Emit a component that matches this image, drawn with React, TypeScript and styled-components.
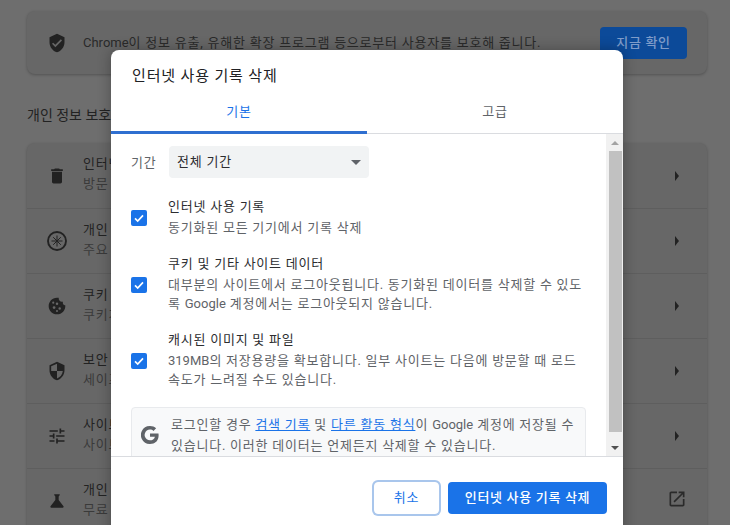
import React from "react";
import styled, { createGlobalStyle } from "styled-components";

const Global = createGlobalStyle`
  html, body { margin: 0; padding: 0; height: 525px; overflow: hidden; background: #6e6e6e; }
  body { font-family: Roboto, "Noto Sans CJK KR", sans-serif; font-size: 13px; letter-spacing: 0.77px; }
  * { box-sizing: border-box; }
`;

const Latin = styled.span`
  letter-spacing: 0;
`;
const Page = styled.div`
  position: relative;
  width: 730px;
  height: 525px;
  overflow: hidden;
  padding: 11px 23px 0 27px;
  background: #6e6e6e;
  color: #202020;
`;
const Card = styled.section`
  background: #676767;
  border-radius: 8px;
  box-shadow: 0 1px 3px rgba(0, 0, 0, 0.25);
`;
const SafetyRow = styled.div`
  display: flex;
  align-items: center;
  height: 63px;
  padding: 0 20px;
`;
const IconSlot = styled.span`
  width: 36px;
  flex: none;
  display: flex;
  color: #222;
`;
const LinkIconSlot = styled.span`
  width: 20px;
  flex: none;
  display: flex;
  margin-top: -5px;
  color: #2a2a2a;
`;
const SafetyText = styled.span`
  flex: 1;
  padding-bottom: 2px;
  white-space: nowrap;
  color: #2a2a2a;
`;
const DimButton = styled.button`
  width: 87px;
  height: 32px;
  padding: 0 0 2px;
  border: 0;
  border-radius: 4px;
  background: #0c4a99;
  color: #7f9cc9;
  font: 500 13px Roboto, "Noto Sans CJK KR", sans-serif;
  letter-spacing: 0.68px;
`;
const SectionTitle = styled.h2`
  margin: 31px 0 18px;
  height: 20px;
  font-size: 14px;
  line-height: 20px;
  font-weight: 400;
  letter-spacing: 0;
  color: #222;
`;
const Row = styled.div`
  display: flex;
  align-items: center;
  height: 65px;
  padding: 0 20px;
  & + & { border-top: 1px solid #5e5e5e; }
`;
const RowText = styled.div`
  flex: 1;
  padding-bottom: 3px;
  line-height: 20px;
  white-space: nowrap;
`;
const RowTitle = styled.div`
  color: #222;
`;
const RowSub = styled.div`
  color: #3a3a3a;
`;
const Arrow = styled.span`
  width: 0;
  height: 0;
  margin-right: 8px;
  border-left: 4px solid #222;
  border-top: 5px solid transparent;
  border-bottom: 5px solid transparent;
`;

const Dialog = styled.div`
  position: absolute;
  left: 111px;
  top: 50px;
  width: 512px;
  height: 500px;
  display: flex;
  flex-direction: column;
  background: #fff;
  border-radius: 8px;
  box-shadow: 0 0 14px rgba(0, 0, 0, 0.3);
  color: #202124;
`;
const DialogTitle = styled.h1`
  margin: 0;
  height: 44px;
  padding: 15px 21px 0;
  font-size: 15px;
  line-height: 22px;
  font-weight: 400;
  letter-spacing: 0.85px;
  color: #202124;
`;
const Tabs = styled.div`
  display: flex;
  height: 40px;
  border-bottom: 1px solid #dadce0;
`;
const Tab = styled.div<{ $active?: boolean }>`
  flex: 1;
  margin-bottom: -1px;
  display: flex;
  align-items: center;
  justify-content: center;
  padding-bottom: 5px;
  border-bottom: 3px solid ${(p) => (p.$active ? "#2f6fd0" : "transparent")};
  color: ${(p) => (p.$active ? "#1a73e8" : "#5f6368")};
`;
const Body = styled.div`
  display: flex;
  height: 322px;
`;
const Scroller = styled.div`
  flex: 1;
  overflow: hidden;
  padding: 12px 20px 0;
`;
const PeriodRow = styled.div`
  display: flex;
  align-items: center;
  height: 32px;
  margin-bottom: 19px;
`;
const PeriodLabel = styled.span`
  width: 38px;
  padding-bottom: 2px;
  color: #5f6368;
`;
const Select = styled.div`
  position: relative;
  width: 200px;
  height: 32px;
  padding: 0 8px 3px;
  display: flex;
  align-items: center;
  border-radius: 4px;
  background: #f1f3f4;
  color: #2c2d30;
  &::after {
    content: "";
    position: absolute;
    right: 8px;
    top: 14px;
    border-left: 5px solid transparent;
    border-right: 5px solid transparent;
    border-top: 5px solid #5f6368;
  }
`;
const Option = styled.div`
  display: flex;
  align-items: center;
  margin-bottom: 16px;
  line-height: 20px;
`;
const Check = styled.span`
  flex: none;
  width: 16px;
  height: 16px;
  margin: 2px 21px 0 0;
  border-radius: 2px;
  background: #1a73e8;
  display: flex;
  align-items: center;
  justify-content: center;
`;
const OptionTitle = styled.div`
  color: #2c2d30;
`;
const OptionSub = styled.div`
  color: #5f6368;
  margin-top: 1px;
  width: 420px;
  line-height: 19.5px;
`;
const Notice = styled.div`
  display: flex;
  align-items: flex-start;
  margin-top: 17px;
  height: 70px;
  width: 455px;
  padding: 6px 8px 6px 9px;
  background: #f8f9fa;
  border: 1px solid #e8eaed;
  border-radius: 4px;
  line-height: 21px;
  color: #5f6368;
`;
const GSlot = styled.span`
  flex: none;
  width: 20px;
  margin: 12px 10px 0 0;
  display: flex;
  color: #5f6368;
`;
const Link = styled.a`
  color: #1a73e8;
  text-decoration: underline;
`;
const ScrollBar = styled.div`
  flex: none;
  width: 17px;
  display: flex;
  flex-direction: column;
  align-items: center;
  background: #f1f1f1;
`;
const ScrollBtn = styled.span<{ $down?: boolean }>`
  flex: none;
  width: 100%;
  height: 17px;
  display: flex;
  align-items: center;
  justify-content: center;
  &::before {
    content: "";
    border-left: 4px solid transparent;
    border-right: 4px solid transparent;
    ${(p) => (p.$down ? "border-top: 4px solid #505050;" : "border-bottom: 4px solid #a3a3a3;")}
  }
`;
const Thumb = styled.div`
  width: 13px;
  height: 281px;
  margin-bottom: 7px;
  margin-left: 1px;
  background: #c1c1c1;
`;
const Footer = styled.div`
  display: flex;
  justify-content: flex-end;
  gap: 9px;
  padding: 25px 16px 0;
  border-top: 1px solid #dadce0;
`;
const CancelButton = styled.button`
  width: 65px;
  height: 32px;
  padding: 0 0 3px;
  border: 1px solid #fff;
  border-radius: 4px;
  background: #fff;
  box-shadow: 0 0 0 2px #a9c6ec;
  color: #1a73e8;
  font: 400 13px Roboto, "Noto Sans CJK KR", sans-serif;
  letter-spacing: 0.68px;
`;
const DeleteButton = styled.button`
  width: 159px;
  height: 32px;
  padding: 0 0 3px;
  border: 0;
  border-radius: 4px;
  background: #1a73e8;
  color: #fff;
  font: 500 13px Roboto, "Noto Sans CJK KR", sans-serif;
  letter-spacing: 0.68px;
`;

const Icon = ({ d, size = 20 }: { d: string; size?: number }) => (
  <svg width={size} height={size} viewBox="0 0 24 24" fill="currentColor">
    <path d={d} />
  </svg>
);

const ICONS = {
  shield: "M12 1L3 5v6c0 5.55 3.84 10.74 9 12 5.16-1.26 9-6.45 9-12V5l-9-4zm-2 16l-4-4 1.41-1.41L10 14.17l6.59-6.59L18 9l-8 8z",
  trash: "M6 19c0 1.1.9 2 2 2h8c1.1 0 2-.9 2-2V7H6v12zM19 4h-3.5l-1-1h-5l-1 1H5v2h14V4z",
  security: "M12 1L3 5v6c0 5.55 3.84 10.74 9 12 5.16-1.26 9-6.45 9-12V5l-9-4zm0 10.99h7c-.53 4.12-3.28 7.79-7 8.94V12H5V6.3l7-3.11v8.8z",
  tune: "M3 17v2h6v-2H3zM3 5v2h10V5H3zm10 16v-2h8v-2h-8v-2h-2v6h2zM7 9v2H3v2h4v2h2V9H7zm14 4v-2H11v2h10zm-6-4h2V7h4V5h-4V3h-2v6z",
  flask: "M19.8 18.4L14 10.67V6.5l1.35-1.69c.26-.33.03-.81-.39-.81H9.04c-.42 0-.65.48-.39.81L10 6.5v4.17L4.2 18.4c-.49.66-.02 1.6.8 1.6h14c.82 0 1.29-.94.8-1.6z",
  external: "M19 19H5V5h7V3H5c-1.11 0-2 .9-2 2v14c0 1.1.89 2 2 2h14c1.1 0 2-.9 2-2v-7h-2v7zM14 3v2h3.59l-9.83 9.83 1.41 1.41L19 6.41V10h2V3h-7z",
};

const SandboxIcon = () => (
  <svg width="20" height="20" viewBox="0 0 20 20" fill="none" stroke="currentColor">
    <circle cx="10" cy="10" r="9" strokeWidth="1.9" />
    <path d="M10 4.5v11M4.5 10h11M6.2 6.2l7.6 7.6M13.8 6.2l-7.6 7.6" strokeWidth="1" />
  </svg>
);

const CookieIcon = () => (
  <svg width="20" height="20" viewBox="0 0 24 24" fill="currentColor" fillRule="evenodd">
    <path d="M21.95 10.99c-1.79-.03-3.7-1.95-2.68-4.22-2.97 1-5.78-1.59-5.19-4.56C7.1.74 2 6.41 2 12c0 5.52 4.48 10 10 10 5.89 0 10.54-5.08 9.95-11.01zM8.5 15.6a1.7 1.7 0 1 1 0-3.4 1.7 1.7 0 0 1 0 3.4zM7.5 9.3a1.3 1.3 0 1 1 0-2.6 1.3 1.3 0 0 1 0 2.6zM12 10.8a1.5 1.5 0 1 1 0-3 1.5 1.5 0 0 1 0 3zM15.2 16.4a1.5 1.5 0 1 1 0-3 1.5 1.5 0 0 1 0 3zM12 19.2a1.2 1.2 0 1 1 0-2.4 1.2 1.2 0 0 1 0 2.4z" />
  </svg>
);

const CheckMark = () => (
  <svg width="12" height="12" viewBox="0 0 12 12" fill="none" stroke="#fff" strokeWidth="1.7">
    <path d="M2 6.4l2.7 2.6L10 3.4" />
  </svg>
);

const GLogo = () => (
  <svg width="18" height="18" viewBox="0 0 24 24" fill="currentColor">
    <path d="M23.5 12.3c0-.85-.08-1.67-.22-2.45H12v4.63h6.57a5.6 5.6 0 0 1-2.44 3.68v3.06h3.95c2.31-2.13 3.42-5.26 3.42-8.92zM12 24c3.3 0 6.06-1.09 8.08-2.96l-3.95-3.06c-1.09.73-2.49 1.17-4.13 1.17-3.18 0-5.87-2.15-6.83-5.03H1.1v3.16A12 12 0 0 0 12 24zM5.17 14.12a7.2 7.2 0 0 1 0-4.24V6.72H1.1a12 12 0 0 0 0 10.56l4.07-3.16zM12 4.75c1.79 0 3.4.62 4.66 1.82l3.5-3.5C18.06 1.1 15.3 0 12 0A12 12 0 0 0 1.1 6.72l4.07 3.16C6.13 6.9 8.82 4.75 12 4.75z" />
  </svg>
);

const rows: { icon: React.ReactNode; title: string; sub: string; external?: boolean }[] = [
  { icon: <Icon d={ICONS.trash} />, title: "인터넷 사용 기록 삭제", sub: "방문 기록, 쿠키, 캐시 등을 삭제합니다." },
  { icon: <SandboxIcon />, title: "개인 정보 보호 가이드", sub: "주요 개인 정보 보호 및 보안 설정을 검토합니다." },
  { icon: <CookieIcon />, title: "쿠키 및 기타 사이트 데이터", sub: "쿠키가 허용됩니다." },
  { icon: <Icon d={ICONS.security} />, title: "보안", sub: "세이프 브라우징 및 기타 보안 설정" },
  { icon: <Icon d={ICONS.tune} />, title: "사이트 설정", sub: "사이트에서 사용하고 표시할 수 있는 정보를 제어합니다." },
  { icon: <Icon d={ICONS.flask} />, title: "개인 정보 보호 샌드박스", sub: "무료 웹을 지원하는 새로운 기술", external: true },
];

export default function App() {
  return (
    <Page>
      <Global />
      <Card>
        <SafetyRow>
          <IconSlot><Icon d={ICONS.shield} /></IconSlot>
          <SafetyText><Latin>Chrome</Latin>이 정보 유출, 유해한 확장 프로그램 등으로부터 사용자를 보호해 줍니다.</SafetyText>
          <DimButton>지금 확인</DimButton>
        </SafetyRow>
      </Card>
      <SectionTitle>개인 정보 보호 및 보안</SectionTitle>
      <Card>
        {rows.map((r) => (
          <Row key={r.title}>
            <IconSlot>{r.icon}</IconSlot>
            <RowText>
              <RowTitle>{r.title}</RowTitle>
              <RowSub>{r.sub}</RowSub>
            </RowText>
            {r.external ? <LinkIconSlot><Icon d={ICONS.external} /></LinkIconSlot> : <Arrow />}
          </Row>
        ))}
      </Card>

      <Dialog>
        <DialogTitle>인터넷 사용 기록 삭제</DialogTitle>
        <Tabs>
          <Tab $active>기본</Tab>
          <Tab>고급</Tab>
        </Tabs>
        <Body>
          <Scroller>
            <PeriodRow>
              <PeriodLabel>기간</PeriodLabel>
              <Select>전체 기간</Select>
            </PeriodRow>
            <Option>
              <Check><CheckMark /></Check>
              <div>
                <OptionTitle>인터넷 사용 기록</OptionTitle>
                <OptionSub>동기화된 모든 기기에서 기록 삭제</OptionSub>
              </div>
            </Option>
            <Option>
              <Check><CheckMark /></Check>
              <div>
                <OptionTitle>쿠키 및 기타 사이트 데이터</OptionTitle>
                <OptionSub>대부분의 사이트에서 로그아웃됩니다. 동기화된 데이터를 삭제할 수 있도록 <Latin>Google</Latin> 계정에서는 로그아웃되지 않습니다.</OptionSub>
              </div>
            </Option>
            <Option>
              <Check><CheckMark /></Check>
              <div>
                <OptionTitle>캐시된 이미지 및 파일</OptionTitle>
                <OptionSub><Latin>319MB</Latin>의 저장용량을 확보합니다. 일부 사이트는 다음에 방문할 때 로드 속도가 느려질 수도 있습니다.</OptionSub>
              </div>
            </Option>
            <Notice>
              <GSlot><GLogo /></GSlot>
              <div>
                로그인할 경우 <Link>검색 기록</Link> 및 <Link>다른 활동 형식</Link>이 <Latin>Google</Latin> 계정에 저장될 수 있습니다. 이러한 데이터는 언제든지 삭제할 수 있습니다.
              </div>
            </Notice>
          </Scroller>
          <ScrollBar>
            <ScrollBtn />
            <Thumb />
            <ScrollBtn $down />
          </ScrollBar>
        </Body>
        <Footer>
          <CancelButton>취소</CancelButton>
          <DeleteButton>인터넷 사용 기록 삭제</DeleteButton>
        </Footer>
      </Dialog>
    </Page>
  );
}
